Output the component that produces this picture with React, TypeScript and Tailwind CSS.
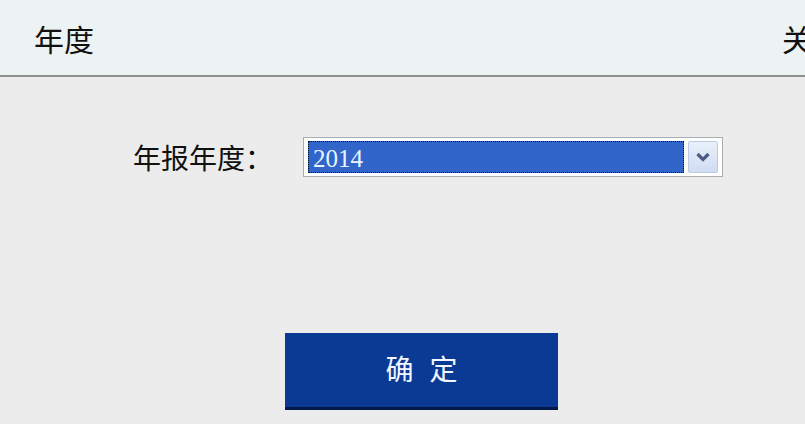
import React from "react";

const cjk = "font-['Noto_Sans_CJK_SC',sans-serif]";

const YearSelect: React.FC = () => {
  return (
    <div className="flex h-[40px] w-[420px] items-center border border-[#a7adb3] bg-white px-[4px] py-[3px]">
      <div className="flex h-full flex-1 items-center border border-dotted border-[#111] bg-[#3265c9] pl-[4px] pt-[2px]">
        <span className="font-['Liberation_Serif',serif] text-[25px] leading-none text-[#e8f4ff]">2014</span>
      </div>
      <div className="ml-[4px] flex h-full w-[30px] items-center justify-center rounded-[2px] border border-[#bccbe3] bg-gradient-to-b from-[#eaf0fa] to-[#cfdcf2]">
        <svg width="16" height="10" viewBox="0 0 16 10" fill="none">
          <path d="M2.5 2l5.5 5.5 5.5-5.5" stroke="#4a5c82" strokeWidth="3.2" />
        </svg>
      </div>
    </div>
  );
};

export default function App() {
  return (
    <div className={`h-[424px] w-[805px] overflow-hidden bg-[#ececec] ${cjk}`}>
      <div className="flex h-[77px] items-center overflow-hidden border-b-2 border-[#8e9192] bg-[#edf2f2] pl-[34px]">
        <span className="text-[30px] leading-none text-[#111]">年度</span>
        <span className="ml-auto mr-[-37px] text-[30px] leading-none text-[#111]">关闭</span>
      </div>
      <div className="flex items-center pl-[133px] pt-[60px]">
        <span className="w-[170px] text-[28px] leading-none text-[#111]">年报年度：</span>
        <YearSelect />
      </div>
      <div className="pl-[285px] pt-[156px]">
        <button className="flex h-[77px] w-[273px] items-center justify-center border-b-[3px] border-[#021a4a] bg-[#0b3a95] pb-[4px] pl-[16px] text-[28px] tracking-[16px] text-[#f2f6ff]">
          确定
        </button>
      </div>
    </div>
  );
}
